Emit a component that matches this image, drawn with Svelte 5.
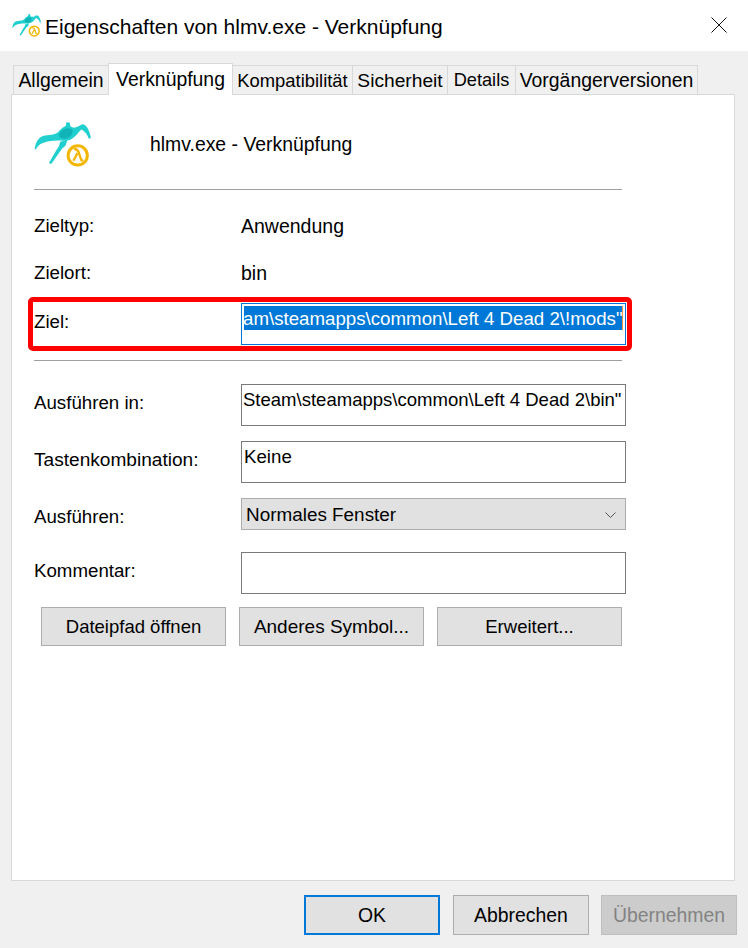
<script lang="ts">
  const tabs = ['Allgemein', 'Verknüpfung', 'Kompatibilität', 'Sicherheit', 'Details', 'Vorgängerversionen'];
  const activeTab = 'Verknüpfung';
</script>

{#snippet appIcon(size)}
  <svg class="app-icon {size}" viewBox="26 24 170 142" aria-hidden="true">
    <path
      fill="#22cfcf"
      d="M27 106 C29 90 34 76 46 69 C62 62 82 66 97 56 C103 47 113 39 121 35 L123 24 L133 26 L135 37 C146 46 158 38 170 31 C185 31 193 52 197 73 L190 74 C186 61 178 52 168 47 C160 54 152 68 138 76 C126 82 110 80 96 80 C78 80 60 83 48 89 C40 93 34 99 31 106 Z"
    />
    <path fill="#22cfcf" d="M104 84 L126 78 L120 96 L110 104 L77 151 L70 148 L94 106 L100 98 Z" />
    <path fill="#10b4b8" d="M100 62 C108 46 124 38 140 46 C146 58 134 72 122 74 C110 76 100 72 100 62 Z" />
    <circle cx="157" cy="125" r="29" fill="#fff" stroke="#f2b705" stroke-width="9" />
    <path
      fill="none"
      stroke="#f2b705"
      stroke-width="7"
      d="M145 106 C154 104 157 108 160 116 L168 140 L174 140 M156 118 L144 141"
    />
  </svg>
{/snippet}

<div class="window">
  <header class="titlebar">
    {@render appIcon('small')}
    <span class="title">Eigenschaften von hlmv.exe - Verknüpfung</span>
    <svg class="close" viewBox="0 0 16 16" aria-hidden="true">
      <path d="M0.5 0.5 L15.5 15.5 M15.5 0.5 L0.5 15.5" stroke="#111" stroke-width="1" fill="none" />
    </svg>
  </header>

  <div class="body">
    <nav class="tabs">
      {#each tabs as tab}
        <div class="tab" class:active={tab === activeTab}>{tab}</div>
      {/each}
    </nav>

    <section class="panel">
      <div class="head">
        {@render appIcon('big')}
        <span class="head-name">hlmv.exe - Verknüpfung</span>
      </div>
      <hr class="first-rule" />

      <div class="row info first-info">
        <span>Zieltyp:</span>
        <span class="value">Anwendung</span>
      </div>
      <div class="row info second-info">
        <span>Zielort:</span>
        <span class="value">bin</span>
      </div>

      <div class="row target">
        <span class="label">Ziel:</span>
        <div class="field focused">
          <span class="selection">am\steamapps\common\Left 4 Dead 2\!mods"</span>
        </div>
        <div class="highlight"></div>
      </div>
      <hr class="second-rule" />

      <div class="row start-in">
        <span class="label">Ausführen in:</span>
        <div class="field path">Steam\steamapps\common\Left 4 Dead 2\bin"</div>
      </div>
      <div class="row shortcut">
        <span class="label wide">Tastenkombination:</span>
        <div class="field keys">Keine</div>
      </div>
      <div class="row run">
        <span class="label">Ausführen:</span>
        <div class="select">
          Normales Fenster
          <svg class="chevron" viewBox="0 0 11 7" aria-hidden="true">
            <path d="M0.5 0.5 L5.5 5.5 L10.5 0.5" stroke="#555" stroke-width="1" fill="none" />
          </svg>
        </div>
      </div>
      <div class="row comment">
        <span class="label">Kommentar:</span>
        <div class="field"></div>
      </div>

      <div class="actions">
        <button>Dateipfad öffnen</button>
        <button class="symbol">Anderes Symbol...</button>
        <button>Erweitert...</button>
      </div>
    </section>

    <footer class="footer">
      <button class="default">OK</button>
      <button>Abbrechen</button>
      <button class="disabled">Übernehmen</button>
    </footer>
  </div>
</div>

<style>
  :global(body) {
    margin: 0;
    background: #f0f0f0;
  }

  .window {
    width: 748px;
    height: 948px;
    display: flex;
    flex-direction: column;
    overflow: hidden;
    font-family: 'Liberation Sans', Arial, sans-serif;
    font-size: 18.7px;
    color: #000;
  }

  .titlebar {
    height: 51px;
    flex: none;
    box-sizing: border-box;
    display: flex;
    align-items: center;
    padding-left: 12px;
    background: #fff;
  }

  .app-icon {
    flex: none;
    display: block;
  }

  .app-icon.small {
    width: 29px;
    height: 24px;
    margin-right: 4px;
  }

  .app-icon.big {
    width: 57px;
    height: 47px;
  }

  .title {
    font-size: 21px;
    margin-top: 2px;
  }

  .close {
    width: 16px;
    height: 16px;
    margin-left: auto;
    margin-right: 21px;
    margin-top: -1px;
  }

  .body {
    flex: 1;
    display: flex;
    flex-direction: column;
    min-height: 0;
  }

  .tabs {
    display: flex;
    align-items: flex-end;
    height: 32px;
    margin-top: 12px;
    padding-left: 13px;
    position: relative;
    z-index: 1;
    margin-bottom: -1px;
    font-size: 19.4px;
  }

  .tab {
    height: 29px;
    margin-bottom: 1px;
    box-sizing: border-box;
    text-align: center;
    line-height: 29px;
    background: #f0f0f0;
    border: 1px solid #d9d9d9;
    border-bottom: none;
    margin-right: -1px;
    white-space: nowrap;
  }

  .tab:nth-child(1) {
    width: 96px;
  }

  .tab:nth-child(2) {
    width: 125px;
  }

  .tab:nth-child(3) {
    width: 121px;
    font-size: 18.4px;
  }

  .tab:nth-child(4) {
    width: 96px;
    font-size: 19.2px;
  }

  .tab:nth-child(5) {
    width: 69px;
    font-size: 18.2px;
  }

  .tab:nth-child(6) {
    width: 183px;
  }

  .tab.active {
    height: 32px;
    margin-bottom: 0;
    line-height: 30px;
    background: #fff;
  }

  .panel {
    flex: 1;
    min-height: 0;
    margin: 0 13px 0 11px;
    box-sizing: border-box;
    border: 1px solid #d9d9d9;
    background: #fff;
    padding: 27px 0 0 22px;
  }

  .head {
    display: flex;
    height: 47px;
    align-items: center;
  }

  .head-name {
    margin-left: 59px;
    margin-top: -3px;
    font-size: 19.4px;
  }

  hr {
    width: 588px;
    height: 1px;
    margin: 0;
    border: none;
    background: #a0a0a0;
  }

  .first-rule {
    margin-top: 20px;
  }

  .second-rule {
    margin-top: 15px;
  }

  .row {
    display: grid;
    grid-template-columns: 207px 385px;
    width: 592px;
    line-height: 36px;
    position: relative;
  }

  .value {
    font-size: 19.5px;
  }

  .label {
    padding-top: 1px;
  }

  .label.wide {
    font-size: 19.1px;
  }

  .first-info {
    margin-top: 18px;
  }

  .second-info {
    margin-top: 11px;
  }

  .target {
    margin-top: 12px;
  }

  .start-in {
    margin-top: 23px;
  }

  .shortcut {
    margin-top: 15px;
  }

  .run {
    margin-top: 15px;
  }

  .comment {
    margin-top: 17px;
  }

  .field {
    height: 42px;
    box-sizing: border-box;
    border: 1px solid #7a7a7a;
    padding: 3px 1px 0;
    line-height: 24px;
    white-space: nowrap;
    overflow: hidden;
  }

  .field.path {
    font-size: 18.55px;
  }

  .field.keys {
    padding-left: 2px;
  }

  .field.focused {
    border-color: #0078d7;
    padding: 2px;
  }

  .selection {
    display: block;
    box-sizing: border-box;
    width: 379px;
    height: 24px;
    background: #0078d7;
    border-right: 1px solid #e8954a;
    color: #fff;
    line-height: 26px;
    text-indent: -1px;
    white-space: nowrap;
    overflow: hidden;
  }

  .highlight {
    position: absolute;
    inset: -6px;
    border: 5px solid #ff0000;
    border-radius: 5px;
    pointer-events: none;
  }

  .select {
    height: 32px;
    box-sizing: border-box;
    display: flex;
    align-items: center;
    justify-content: space-between;
    padding: 2px 9px 0 4px;
    line-height: 28px;
    background: #e1e1e1;
    border: 1px solid #adadad;
    font-size: 18.9px;
  }

  .chevron {
    width: 11px;
    height: 7px;
  }

  button {
    font: inherit;
    color: #000;
    padding: 0;
    background: #e1e1e1;
    border: 1px solid #adadad;
    border-radius: 0;
  }

  .actions {
    display: flex;
    gap: 13px;
    margin: 13px 0 0 7px;
    font-size: 18.5px;
  }

  .actions button {
    width: 185px;
    height: 39px;
  }

  .actions .symbol {
    font-size: 19px;
  }

  .footer {
    flex: none;
    height: 67px;
    box-sizing: border-box;
    display: flex;
    justify-content: flex-end;
    align-items: flex-start;
    gap: 12px;
    padding: 14px 11px 0 0;
    font-size: 19.4px;
  }

  .footer button {
    width: 136px;
    height: 40px;
  }

  .footer .default {
    margin-right: 1px;
    border: 2px solid #0078d7;
  }

  .footer .disabled {
    background: #cccccc;
    border-color: #bfbfbf;
    color: #838383;
  }
</style>
